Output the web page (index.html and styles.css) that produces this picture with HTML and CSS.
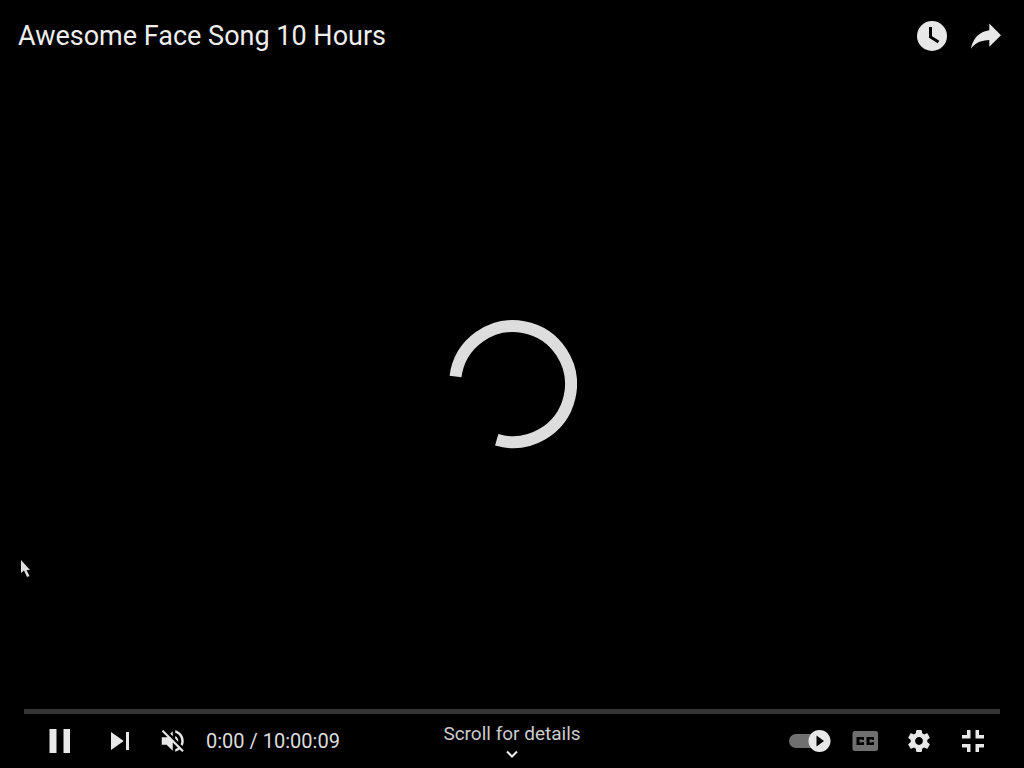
FILE: index.html
```
<!DOCTYPE html>

<html lang="en">
    <head>
        <title>Awesome Face Song 10 Hours</title>
        <meta charset="UTF-8">
        <meta name="viewport" content="width=device-width, initial-scale=1.0">
        <link rel="stylesheet" href="styles.css">
    </head>
    <body>
        <div class="player">
            <!-- title bar -->
            <header class="top-bar">
                <h1 class="title">Awesome Face Song 10 Hours</h1>
                <button class="button" type="button" aria-label="Watch later">
                    <svg class="icon" viewBox="0 0 54 54">
                        <circle cx="27" cy="27" r="15"/>
                        <path class="cutout-line" d="M25.5 18v10l8 5"/>
                    </svg>
                </button>
                <button class="button" type="button" aria-label="Share">
                    <svg class="icon" viewBox="0 0 36 36">
                        <path d="m 20.20,14.19 0,-4.45 7.79,7.79 -7.79,7.62 0,-4.56 C 16.27,20.69 12.10,21.81 9.34,24.76 8.80,25.13 7.60,27.29 8.12,25.65 9.08,21.32 11.80,17.18 15.98,15.38 c 1.33,-0.60 2.76,-0.98 4.21,-1.19 z"/>
                    </svg>
                </button>
            </header>
            <!-- loading spinner -->
            <main class="stage">
                <svg class="spinner" viewBox="0 0 130 130" role="img" aria-label="Loading">
                    <path d="M8.5 57.5A58 58 0 1 1 49.7 120.8"/>
                </svg>
            </main>
            <!-- controls -->
            <footer class="bottom-bar">
                <div class="progress"></div>
                <div class="controls">
                    <div class="left-controls">
                        <button class="button play-button" type="button" aria-label="Pause">
                            <svg class="icon" viewBox="0 0 54 54">
                                <path d="M17.500 15h7v24h-7zM31.500 15h6.500v24h-6.500z"/>
                            </svg>
                        </button>
                        <button class="button" type="button" aria-label="Next">
                            <svg class="icon" viewBox="0 0 36 36">
                                <path d="M12 24l8.500-6L12 12zM22 12v12h2V12z"/>
                            </svg>
                        </button>
                        <button class="button" type="button" aria-label="Unmute">
                            <svg class="icon small-icon" viewBox="0 0 36 36">
                                <path d="m 21.48,17.98 c 0,-1.77 -1.02,-3.29 -2.5,-4.03 v 2.21 l 2.45,2.45 c .03,-0.2 .05,-0.41 .05,-0.63 z m 2.5,0 c 0,.94 -0.2,1.82 -0.54,2.64 l 1.51,1.51 c .66,-1.24 1.03,-2.65 1.03,-4.15 0,-4.28 -2.99,-7.86 -7,-8.76 v 2.05 c 2.89,.86 5,3.54 5,6.71 z M 9.25,8.98 l -1.27,1.26 4.72,4.73 H 7.98 v 6 H 11.98 l 5,5 v -6.73 l 4.25,4.25 c -0.67,.52 -1.42,.93 -2.25,1.18 v 2.06 c 1.38,-0.31 2.63,-0.95 3.69,-1.81 l 2.04,2.05 1.27,-1.27 -9,-9 -7.72,-7.72 z m 7.72,.99 -2.09,2.08 2.09,2.09 V 9.98 z"/>
                            </svg>
                        </button>
                        <span class="time">0:00 / 10:00:09</span>
                    </div>
                    <button class="details" type="button">
                        <span>Scroll for details</span>
                        <svg class="chevron" viewBox="0 0 14 8">
                            <path d="M2 1.500l5 5 5-5"/>
                        </svg>
                    </button>
                    <div class="right-controls">
                        <button class="button" type="button" aria-label="Autoplay">
                            <svg class="icon" viewBox="0 0 54 54">
                                <rect class="dim" x="5" y="20" width="36" height="14" rx="7"/>
                                <circle cx="35.500" cy="27" r="11"/>
                                <path class="cutout" d="M32.500 21.500v11l7.500-5.500z"/>
                            </svg>
                        </button>
                        <button class="button" type="button" aria-label="Captions">
                            <svg class="icon" viewBox="0 0 54 54">
                                <rect class="dim" x="14.500" y="17" width="25.500" height="20" rx="2.500"/>
                                <path class="cutout" d="M18.500 23h7.500v3h-2v-.5h-2.500v3h2.500V28h2v3h-7.500zM28.500 23H36v3h-2v-.5h-2.500v3H34V28h2v3h-7.500z"/>
                            </svg>
                        </button>
                        <button class="button" type="button" aria-label="Settings">
                            <svg class="icon medium-icon" viewBox="0 0 36 36">
                                <path d="m 23.94,18.78 c .03,-0.25 .05,-0.51 .05,-0.78 0,-0.27 -0.02,-0.52 -0.05,-0.78 l 1.68,-1.32 c .15,-0.12 .19,-0.33 .09,-0.51 l -1.6,-2.76 c -0.09,-0.17 -0.31,-0.24 -0.48,-0.17 l -1.99,.8 c -0.41,-0.32 -0.86,-0.58 -1.35,-0.78 l -0.30,-2.12 c -0.02,-0.19 -0.19,-0.33 -0.39,-0.33 l -3.2,0 c -0.2,0 -0.36,.14 -0.39,.33 l -0.30,2.12 c -0.48,.2 -0.93,.47 -1.35,.78 l -1.99,-0.8 c -0.18,-0.07 -0.39,0 -0.48,.17 l -1.6,2.76 c -0.10,.17 -0.05,.39 .09,.51 l 1.68,1.32 c -0.03,.25 -0.05,.52 -0.05,.78 0,.26 .02,.52 .05,.78 l -1.68,1.32 c -0.15,.12 -0.19,.33 -0.09,.51 l 1.6,2.76 c .09,.17 .31,.24 .48,.17 l 1.99,-0.8 c .41,.32 .86,.58 1.35,.78 l .30,2.12 c .02,.19 .19,.33 .39,.33 l 3.2,0 c .2,0 .36,-0.14 .39,-0.33 l .30,-2.12 c .48,-0.2 .93,-0.47 1.35,-0.78 l 1.99,.8 c .18,.07 .39,0 .48,-0.17 l 1.6,-2.76 c .09,-0.17 .05,-0.39 -0.09,-0.51 l -1.68,-1.32 0,0 z m -5.94,2.01 c -1.54,0 -2.8,-1.25 -2.8,-2.8 0,-1.54 1.25,-2.8 2.8,-2.8 1.54,0 2.8,1.25 2.8,2.8 0,1.54 -1.25,2.8 -2.8,2.8 l 0,0 z"/>
                            </svg>
                        </button>
                        <button class="button" type="button" aria-label="Exit full screen">
                            <svg class="icon" viewBox="0 0 54 54">
                                <path d="M21 16h3.500v8.500H16V21h5zM29.500 16H33v5h5v3.500h-8.500zM16 30h8.500v8H21v-4.500h-5zM29.500 30H38v3.500h-5V38h-3.500z"/>
                            </svg>
                        </button>
                    </div>
                </div>
            </footer>
            <!-- mouse pointer -->
            <svg class="pointer" viewBox="0 0 12 20">
                <path d="M1 1v13l3-2.500 3 6.500 2.500-1-3-6H10z"/>
            </svg>
        </div>
    </body>
</html>
```
FILE: styles.css
```
* {
    box-sizing: border-box;
}
body {
    margin: 0px;
    background: #000;
    color: #eee;
    font-family: Roboto, "Liberation Sans", sans-serif;
}
.player {
    position: relative;
    display: flex;
    flex-direction: column;
    min-height: 100vh;
}
.top-bar {
    display: flex;
    padding: 9px 11px 0 18px;
}
.title {
    flex: 1;
    margin: 0;
    font-size: 27px;
    font-weight: 400;
    line-height: 54px;
}
.button, .details {
    padding: 0;
    border: 0;
    background: none;
    color: inherit;
    font: inherit;
    cursor: pointer;
}
.button {
    display: flex;
    align-items: center;
    justify-content: center;
    width: 54px;
    height: 54px;
}
.play-button {
    width: 69px;
}
.icon {
    width: 54px;
    height: 54px;
    fill: #e8e8e8;
}
.medium-icon {
    width: 50px;
    height: 50px;
}
.small-icon {
    width: 44px;
    height: 44px;
}
.icon .dim {
    fill: #707070;
}
.icon .cutout {
    fill: #000;
}
.cutout-line {
    fill: none;
    stroke: #000;
    stroke-width: 3;
}
.stage {
    flex: 1;
    display: flex;
    align-items: center;
    justify-content: center;
    padding-bottom: 4px;
}
.spinner {
    width: 130px;
    height: 130px;
    fill: none;
    stroke: #ddd;
    stroke-width: 12;
}
.bottom-bar {
    padding: 0 24px;
}
.progress {
    height: 5px;
    background: #333;
}
.controls {
    display: grid;
    grid-template-columns: 1fr auto 1fr;
    height: 54px;
}
.left-controls, .right-controls {
    display: flex;
    align-items: center;
}
.right-controls {
    justify-content: flex-end;
}
.time {
    padding-left: 5px;
    font-size: 20px;
    color: #ddd;
}
.details {
    display: flex;
    flex-direction: column;
    align-items: center;
    justify-content: center;
    gap: 4px;
    padding-bottom: 2px;
    font-size: 19px;
    line-height: 24px;
    color: #ccc;
}
.chevron {
    width: 14px;
    height: 8px;
    fill: none;
    stroke: #eee;
    stroke-width: 2;
}
.pointer {
    position: absolute;
    left: 20px;
    top: 559px;
    width: 12px;
    height: 20px;
    fill: #ddd;
}
```
